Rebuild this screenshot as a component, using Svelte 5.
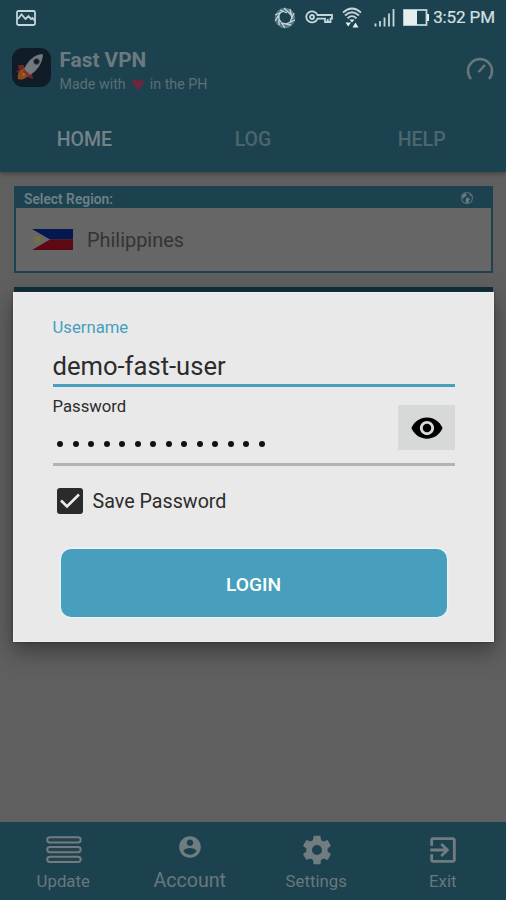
<script lang="ts">
    const tabs: string[] = ["HOME", "LOG", "HELP"];
    let activeTab: string = "HOME";

    let username: string = "demo-fast-user";
    let passwordLength: number = 14;
    let savePassword: boolean = true;
</script>

<div class="app">
    <header>
        <div class="status-bar">
            <svg class="picture" width="20" height="16" viewBox="0 0 20 16">
                <rect x="1" y="1" width="18" height="14" rx="1.500" />
                <path d="M2 9L5.500 4.500L9.500 9L12.500 6L15 9L16.500 8L18.500 10.500" />
            </svg>
            <div class="indicators">
                <svg class="ring" width="24" height="22" viewBox="0 0 24 22">
                    <circle class="thick" cx="12" cy="11" r="8.500" />
                    <path d="M7 3L14 6M11 1L18 8M17 2L19 12M21 6L17 15M22 13L13 17M18 18L8 16M12 21L6 12M6 18L6 8M2 14L8 5M2 8L11 4" />
                </svg>
                <svg class="key" width="28" height="15" viewBox="0 0 28 15">
                    <path d="M12.500 5H27V8.700H25.500V12H20V8.700H12.500A5.800 5.500 0 1 1 12.500 5Z" />
                    <circle cx="7" cy="7" r="2" />
                    <path d="M22.700 9V12" />
                </svg>
                <svg class="wifi" width="20" height="22" viewBox="0 0 20 22">
                    <path d="M1 5.500Q10 -2.500 19 5.500M3 8.500Q10 2 17 8.500M5.500 11.300Q10 7 14.500 11.300" />
                    <path class="solid" d="M7.500 12.500H12.500L10 15.500ZM3.500 15.500H9L6.200 19.500ZM13.500 15.500L16.500 20.500H10.500Z" />
                </svg>
                <svg class="signal" width="21" height="19" viewBox="0 0 21 19">
                    <path d="M1.500 15.500V18.500M6 13V18.500M10.500 9.500V18.500M15 5.500V18.500M19.500 1V18.500" />
                </svg>
                <svg class="battery" width="26" height="17" viewBox="0 0 26 17">
                    <rect x="1" y="1" width="22.500" height="15" />
                    <path class="solid" d="M1 1H14V16H1ZM24 5H26V12H24Z" />
                </svg>
                <span class="clock">3:52 PM</span>
            </div>
        </div>

        <div class="brand">
            <svg class="logo" width="39" height="39" viewBox="0 0 39 39">
                <rect width="39" height="39" rx="11" fill="#101d29" />
                <path d="M12 17L6 17L7 22L4 23L8 26L13 24ZM20 26L21 31L15 29L14 25Z" fill="#6d2525" />
                <path d="M12 20C7 23 5 26 6 31C11 33 15 29 18 26Z" fill="#8b4b20" />
                <path d="M12 22L10 28L16 26Z" fill="#98712b" />
                <path d="M30 6C23 7 17 11 12 21L18 27C26 22 30 15 31 7Z" fill="#737a7e" />
                <path d="M12 21L18 27L15 28L11 24Z" fill="#8a2d28" />
                <circle cx="24.500" cy="13.500" r="3" fill="#101d29" stroke="#4c5860" />
            </svg>
            <div class="titles">
                <h1>Fast VPN</h1>
                <p>
                    Made with
                    <svg width="12" height="11" viewBox="0 0 12 11"><path d="M6 11L1 6C-1 3 1 0 3.500 .5Q5 .7 6 2.300Q7 .7 8.500 .5C11 0 13 3 11 6Z" fill="#68293f" /></svg>
                    in the PH
                </p>
            </div>
            <svg class="gauge" width="28" height="25" viewBox="0 0 28 25">
                <path d="M5 23A12 12 0 1 1 23 23" />
                <path d="M12.500 16L19 9" />
            </svg>
        </div>

        <nav class="tabs">
            {#each tabs as tab}
                <span class:active={tab === activeTab}>{tab}</span>
            {/each}
        </nav>
    </header>

    <main>
        <section class="region">
            <div class="region-title">
                <span>Select Region:</span>
                <svg width="14" height="14" viewBox="0 0 14 14">
                    <circle cx="7" cy="7" r="5.500" />
                    <path class="land" d="M2 4L5 2L7 4L5 6L3 8ZM7 6L10 8L8 12H6L5.500 9ZM9 2L12 5L10 5Z" />
                </svg>
            </div>
            <div class="region-body">
                <svg width="41" height="21" viewBox="0 0 41 21">
                    <path fill="#04174f" d="M0 0H41V10.500H0Z" />
                    <path fill="#5d0913" d="M0 10.500H41V21H0Z" />
                    <path fill="#676767" d="M0 0L18 10.500L0 21Z" />
                    <circle cx="5.500" cy="10.500" r="3.200" fill="#77713c" />
                </svg>
                <span>Philippines</span>
            </div>
        </section>
        <section class="next-card"></section>
    </main>

    <footer>
        <div class="item update">
            <svg width="36" height="28" viewBox="0 0 36 28">
                <rect x="1.200" y="1.200" width="33.500" height="5.200" rx="2.600" />
                <rect x="1.200" y="11" width="33.500" height="5.200" rx="2.600" />
                <rect x="1.200" y="20.700" width="33.500" height="5.200" rx="2.600" />
            </svg>
            <span>Update</span>
        </div>
        <div class="item account">
            <svg width="26" height="26" viewBox="0 0 24 24">
                <path d="M12 2C6.480 2 2 6.480 2 12s4.480 10 10 10 10-4.480 10-10S17.520 2 12 2zm0 3c1.660 0 3 1.340 3 3s-1.340 3-3 3-3-1.340-3-3 1.340-3 3-3zm0 14.200c-2.500 0-4.710-1.280-6-3.220.03-1.990 4-3.080 6-3.080 1.990 0 5.970 1.090 6 3.080-1.290 1.940-3.500 3.220-6 3.220z" />
            </svg>
            <span>Account</span>
        </div>
        <div class="item settings">
            <svg width="34" height="34" viewBox="0 0 24 24">
                <path d="M19.430 12.980c.04-.32.07-.64.07-.98s-.03-.66-.07-.98l2.110-1.650c.19-.15.24-.42.12-.64l-2-3.460c-.12-.22-.39-.3-.61-.22l-2.490 1c-.52-.4-1.080-.73-1.690-.98l-.38-2.650C14.460 2.180 14.250 2 14 2h-4c-.25 0-.46.18-.49.42l-.38 2.650c-.61.25-1.170.59-1.690.98l-2.490-1c-.23-.09-.49 0-.61.22l-2 3.460c-.13.22-.07.49.12.64l2.110 1.650c-.04.32-.07.65-.07.98s.03.66.07.98l-2.110 1.650c-.19.15-.24.42-.12.64l2 3.460c.12.22.39.3.61.22l2.490-1c.52.4 1.080.73 1.690.98l.38 2.650c.03.24.24.42.49.42h4c.25 0 .46-.18.49-.42l.38-2.650c.61-.25 1.170-.59 1.690-.98l2.490 1c.23.09.49 0 .61-.22l2-3.460c.12-.22.07-.49-.12-.64l-2.110-1.650zM12 15.500c-1.930 0-3.500-1.570-3.500-3.500s1.570-3.500 3.500-3.500 3.500 1.570 3.500 3.500-1.570 3.500-3.500 3.500z" />
            </svg>
            <span>Settings</span>
        </div>
        <div class="item exit">
            <svg width="34" height="34" viewBox="0 0 24 24">
                <path d="M10.090 15.590L11.500 17l5-5-5-5-1.410 1.410L12.670 11H3v2h9.670l-2.580 2.590zM19 3H5c-1.110 0-2 .9-2 2v4h2V5h14v14H5v-4H3v4c0 1.100.89 2 2 2h14c1.100 0 2-.9 2-2V5c0-1.100-.9-2-2-2z" />
            </svg>
            <span>Exit</span>
        </div>
    </footer>

    <div class="dialog">
        <div class="field focused">
            <span class="label">Username</span>
            <span class="value">{username}</span>
        </div>
        <div class="field password">
            <div class="password-text">
                <span class="label">Password</span>
                <div class="dots">
                    {#each Array(passwordLength) as _}
                        <i></i>
                    {/each}
                </div>
            </div>
            <button class="reveal" aria-label="Show password">
                <svg width="34" height="34" viewBox="0 0 24 24">
                    <path d="M12 4.500C7 4.500 2.730 7.610 1 12c1.730 4.390 6 7.500 11 7.500s9.270-3.110 11-7.500c-1.730-4.390-6-7.500-11-7.500zM12 17c-2.760 0-5-2.240-5-5s2.240-5 5-5 5 2.240 5 5-2.240 5-5 5zm0-8c-1.660 0-3 1.340-3 3s1.340 3 3 3 3-1.340 3-3-1.340-3-3-3z" />
                </svg>
            </button>
        </div>
        <div class="save">
            <span class="checkbox">
                {#if savePassword}
                    <svg width="26" height="26" viewBox="0 0 26 26"><path d="M4 12.500L10 18.500L22 6.500" /></svg>
                {/if}
            </span>
            <span class="save-label">Save Password</span>
        </div>
        <button class="login">LOGIN</button>
    </div>
</div>

<style>
    :global(body) {
        margin: 0;
    }
    .app {
        --bar: #1d424f;
        --accent: #479fbd;

        position: relative;
        display: flex;
        flex-direction: column;
        width: 506px;
        height: 900px;
        overflow: hidden;

        background-color: #5f5f5f;
        font-family: Roboto, sans-serif;
    }
    .app * {
        box-sizing: border-box;
    }
    svg {
        flex: none;
        display: block;
    }

    header {
        height: 172px;
        background-color: var(--bar);
        box-shadow: 0 1px 5px rgba(0, 0, 0, 0.4);
    }
    .status-bar {
        display: flex;
        justify-content: space-between;
        align-items: center;
        height: 35px;
        padding: 0 11px 0 16px;
    }
    .status-bar svg {
        fill: none;
        stroke: #c3d6da;
        stroke-width: 1.8;
    }
    .status-bar .solid {
        fill: #e6eeef;
        stroke: none;
    }
    .status-bar .ring {
        stroke-width: 1.3;
    }
    .ring .thick {
        stroke: #587b85;
        stroke-width: 3.5;
    }
    .indicators {
        display: flex;
        align-items: center;
    }
    .key {
        margin-left: 8px;
    }
    .wifi {
        margin-left: 9px;
    }
    .signal {
        margin-left: 12px;
    }
    .battery {
        margin-left: 8px;
    }
    .clock {
        margin-left: 4px;
        color: #d6e0e2;
        font-size: 17px;
        letter-spacing: -0.1px;
        line-height: 35px;
        -webkit-text-stroke: 0.2px #d6e0e2;
    }

    .brand {
        display: flex;
        align-items: flex-start;
        height: 71px;
        padding: 13px 12px 0 12px;
    }
    .titles {
        flex: 1;
        margin-left: 8.5px;
        color: #6c7a80;
    }
    h1 {
        margin: 0;
        font-size: 20.8px;
        font-weight: 700;
        line-height: 25px;
    }
    p {
        display: flex;
        align-items: center;
        gap: 6px;
        margin: 2px 0 0;
        color: #5b6f76;
        font-size: 14.3px;
        line-height: 19px;
    }
    .gauge {
        margin-top: 8px;
        fill: none;
        stroke: #68777c;
        stroke-width: 2.5;
    }

    .tabs {
        display: grid;
        grid-template-columns: repeat(3, 1fr);
        height: 66px;
        text-align: center;
        color: #4c666f;
        font-size: 19.5px;
        font-weight: 500;
        line-height: 67px;
    }
    .tabs .active {
        color: #748388;
    }

    main {
        flex: 1;
        padding: 14px 13px 0 14px;
    }
    .region {
        height: 87px;
        border: 2px solid var(--bar);
        border-top: none;
        background-color: #666;
    }
    .region-title {
        display: flex;
        align-items: center;
        justify-content: space-between;
        height: 22px;
        padding: 3px 17px 0 8px;
        background-color: var(--bar);
        color: #6d8087;
        font-size: 13.8px;
        font-weight: 600;
    }
    .region-title svg {
        margin-top: -1px;
        fill: none;
        stroke: #4e6870;
        stroke-width: 1.4;
    }
    .region-title .land {
        fill: #667b82;
        stroke: none;
    }
    .region-body {
        display: flex;
        align-items: center;
        gap: 14px;
        height: 63px;
        padding-left: 16px;
        color: #343434;
        font-size: 19.9px;
    }
    .region-body span {
        padding-top: 2px;
    }
    .next-card {
        height: 20px;
        margin-top: 14px;
        background-color: #102f3b;
    }

    footer {
        display: grid;
        grid-template-columns: repeat(4, 1fr);
        height: 78px;
        background-color: var(--bar);
        color: #68777d;
    }
    .item {
        display: flex;
        flex-direction: column;
        align-items: center;
        font-size: 16.8px;
    }
    .item svg {
        fill: #717c81;
    }
    .item span {
        margin-top: auto;
        padding-bottom: 7px;
        line-height: 24px;
    }
    .update svg {
        margin: 14px 0 0 2px;
        fill: #27424d;
        stroke: #717c81;
        stroke-width: 2;
    }
    .account {
        font-size: 19.6px;
    }
    .account svg {
        margin-top: 12px;
    }
    .account span {
        padding-bottom: 7px;
    }
    .settings svg, .exit svg {
        margin: 11px 0 0 1px;
    }

    .dialog {
        position: absolute;
        top: 292px;
        left: 13px;
        width: 481px;
        height: 350px;
        padding: 25px 38px 0 38.5px;

        border: 1px solid #f0f0f0;
        background-color: #e9e9e9;
        color: #2c2c2c;
        box-shadow: 0 9px 20px 1px rgba(0, 0, 0, 0.35), 0 0 2px #333;
    }
    .field {
        border-bottom: 3px solid var(--accent);
    }
    .label, .value {
        display: block;
    }
    .label {
        font-size: 16.7px;
        line-height: 20px;
    }
    .focused {
        height: 69px;
    }
    .focused .label {
        color: var(--accent);
    }
    .value {
        margin-top: 11px;
        font-size: 25.6px;
        line-height: 34px;
    }
    .password {
        display: flex;
        justify-content: space-between;
        height: 79px;
        padding-top: 10px;
        border-color: #b3b3b3;
    }
    .dots {
        display: flex;
        gap: 9.5px;
        margin: 24px 0 0 4.5px;
    }
    .dots i {
        width: 6px;
        height: 6px;
        border-radius: 50%;
        background-color: #111;
    }
    .reveal {
        display: grid;
        place-items: center;
        width: 57px;
        height: 45px;
        margin-top: 8px;
        padding: 0;
        border: none;
        background-color: #d7d9d9;
    }
    .save {
        display: flex;
        align-items: center;
        gap: 10px;
        margin: 19px 0 0 4px;
        font-size: 19.7px;
        line-height: 28px;
    }
    .save-label {
        padding-top: 3px;
    }
    .checkbox {
        width: 26px;
        height: 26px;
        border-radius: 3px;
        background-color: #2b2b2b;
    }
    .checkbox svg {
        fill: none;
        stroke: #eee;
        stroke-width: 2.5;
    }
    .login {
        display: block;
        width: 386px;
        height: 68px;
        margin: 33px 0 0 8px;
        padding-top: 3px;
        border: none;
        border-radius: 10px;
        background-color: var(--accent);
        box-shadow: 0 0 2px 1px #e8f7f7;
        color: #fff;
        font: 500 19.2px Roboto, sans-serif;
    }
</style>
